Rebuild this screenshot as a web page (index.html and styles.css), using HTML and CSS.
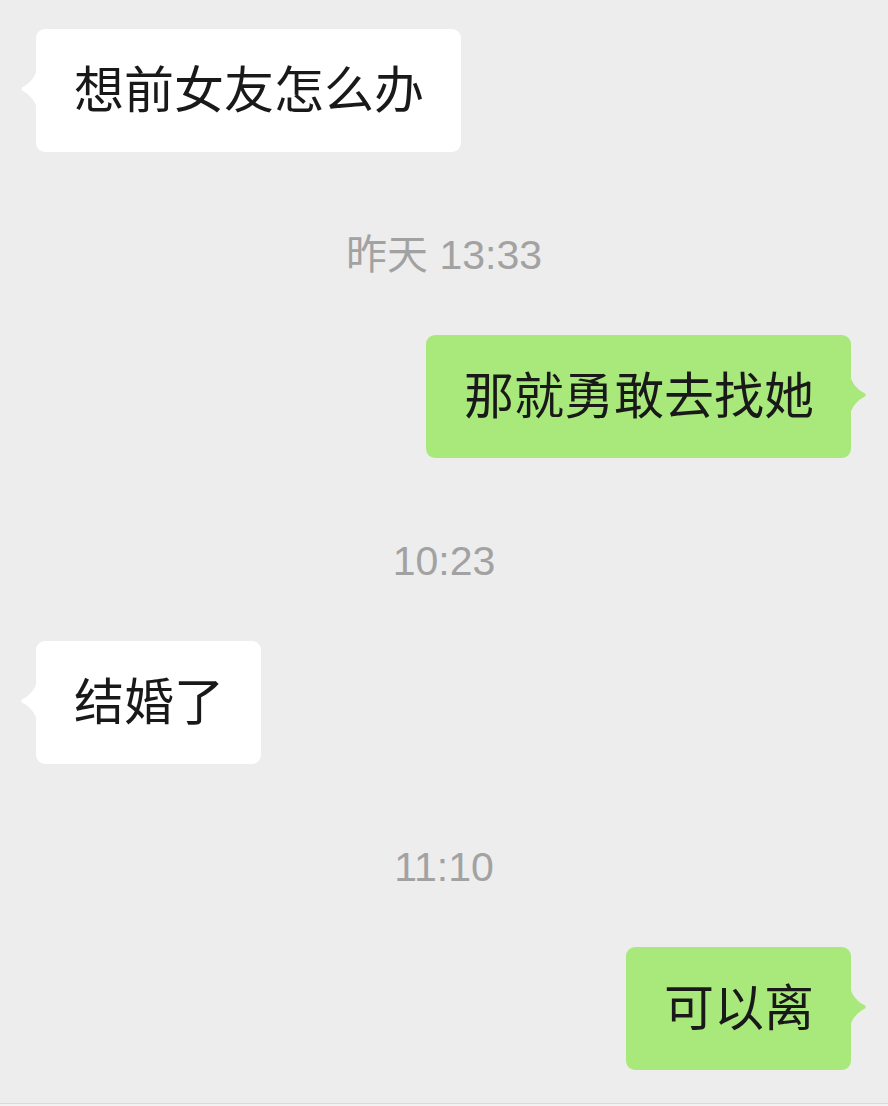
FILE: index.html
```html
<!DOCTYPE html>
<html lang="zh-CN">
<head>
    <meta charset="UTF-8">
    <title>聊天</title>
    <link rel="stylesheet" href="styles.css">
</head>
<body>
<div class="chat">
    <div class="row left">
        <div class="bubble white">
            <svg class="tail" width="17" height="40" viewBox="0 0 17 40"><path d="M17 0 C15 9 9 15 2 18.5 Q0.5 20 2 21.5 C9 25 15 31 17 40 Z"/></svg>
            想前女友怎么办
        </div>
    </div>
    <div class="time">昨天 13:33</div>
    <div class="row right">
        <div class="bubble green">
            <svg class="tail" width="17" height="40" viewBox="0 0 17 40"><path d="M0 0 C2 9 8 15 15 18.5 Q16.5 20 15 21.5 C8 25 2 31 0 40 Z"/></svg>
            那就勇敢去找她
        </div>
    </div>
    <div class="time">10:23</div>
    <div class="row left">
        <div class="bubble white">
            <svg class="tail" width="17" height="40" viewBox="0 0 17 40"><path d="M17 0 C15 9 9 15 2 18.5 Q0.5 20 2 21.5 C9 25 15 31 17 40 Z"/></svg>
            结婚了
        </div>
    </div>
    <div class="time">11:10</div>
    <div class="row right">
        <div class="bubble green">
            <svg class="tail" width="17" height="40" viewBox="0 0 17 40"><path d="M0 0 C2 9 8 15 15 18.5 Q16.5 20 15 21.5 C8 25 2 31 0 40 Z"/></svg>
            可以离
        </div>
    </div>
</div>
<div class="bottom-bar"></div>
</body>
</html>
```

FILE: styles.css
```css
html, body {
    margin: 0;
    padding: 0;
}

body {
    background-color: #ededed;
    font-family: "Noto Sans CJK SC", sans-serif;
    width: 888px;
    height: 1106px;
    overflow: hidden;
}

.chat {
    display: flex;
    flex-direction: column;
    padding-top: 29px;
    height: 1074px;
}

.row {
    display: flex;
}

.row.left {
    justify-content: flex-start;
    padding-left: 36px;
}

.row.right {
    justify-content: flex-end;
    padding-right: 37px;
}

.bubble {
    position: relative;
    box-sizing: border-box;
    height: 123px;
    line-height: 115px;
    padding: 0 37px 8px 38px;
    border-radius: 9px;
    font-size: 50px;
    color: #191919;
    white-space: nowrap;
}

.bubble.white {
    background-color: #ffffff;
}

.bubble.green {
    background-color: #a9e97c;
}

.tail {
    position: absolute;
    top: 40px;
    display: block;
}

.white .tail {
    left: -16px;
    fill: #ffffff;
}

.green .tail {
    right: -16px;
    fill: #a9e97c;
}

.time {
    margin: 73px 0 50px;
    height: 60px;
    line-height: 60px;
    text-align: center;
    font-family: "Liberation Sans", "Noto Sans CJK SC", sans-serif;
    font-size: 41px;
    color: #a2a2a2;
}

.bottom-bar {
    height: 2px;
    border-top: 1px solid #d9d9d9;
    background-color: #f2f2f2;
}
```
